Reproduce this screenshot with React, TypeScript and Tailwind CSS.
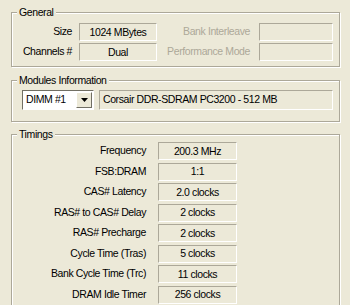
const font = { fontFamily: '"Liberation Sans", Arial, sans-serif' }

function Group({ title, className, children }: { title: string; className?: string; children: React.ReactNode }) {
  return (
    <div className={`relative border border-[#ACA899] shadow-[inset_1px_1px_0_#fff,1px_1px_0_#fff] ${className ?? ''}`}>
      <span className="absolute left-[5px] top-[-8px] bg-[#ECE9D8] px-[2px] text-[10.5px] leading-[14px] tracking-[-0.4px] text-black">{title}</span>
      {children}
    </div>
  )
}

function Box({ value, className }: { value?: string; className?: string }) {
  return (
    <div className={`flex h-[18px] items-center justify-center border border-t-[#ACA899] border-l-[#ACA899] border-b-white border-r-white bg-[#ECE9D8] text-[10.5px] leading-none tracking-[-0.4px] text-black ${className ?? ''}`}>
      {value}
    </div>
  )
}

const timings: [string, string][] = [
  ['Frequency', '200.3 MHz'],
  ['FSB:DRAM', '1:1'],
  ['CAS# Latency', '2.0 clocks'],
  ['RAS# to CAS# Delay', '2 clocks'],
  ['RAS# Precharge', '2 clocks'],
  ['Cycle Time (Tras)', '5 clocks'],
  ['Bank Cycle Time (Trc)', '11 clocks'],
  ['DRAM Idle Timer', '256 clocks'],
]

const label = 'whitespace-nowrap text-right text-[10.5px] tracking-[-0.4px]'

export default function App() {
  return (
    <div className="h-[305px] w-[350px] overflow-hidden bg-[#ECE9D8] pl-[11px] pt-[12px]" style={font}>
      <div className="flex w-[329px] flex-col">
        <Group title="General" className="h-[55px]">
          <div className="flex flex-col gap-[2px] pt-[10px]">
            <div className="flex items-center">
              <span className={`w-[60px] ${label}`}>Size</span>
              <Box value="1024 MBytes" className="ml-[7px] w-[78px]" />
              <span className={`w-[93px] text-[#ACA899] ${label}`}>Bank Interleave</span>
              <Box className="ml-[9px] w-[74px]" />
            </div>
            <div className="flex items-center">
              <span className={`w-[60px] ${label}`}>Channels #</span>
              <Box value="Dual" className="ml-[7px] w-[78px]" />
              <span className={`w-[93px] text-[#ACA899] ${label}`}>Performance Mode</span>
              <Box className="ml-[9px] w-[74px]" />
            </div>
          </div>
        </Group>

        <Group title="Modules Information" className="mt-[13px] h-[42px]">
          <div className="flex items-center gap-[5px] pl-[10px] pt-[9px]">
            <div className="flex h-[20px] w-[72px] items-center border border-t-[#716F64] border-l-[#716F64] border-b-white border-r-white bg-white">
              <span className="flex-1 pl-[3px] text-[10.5px] tracking-[-0.4px]">DIMM #1</span>
              <div className="mr-px flex h-[16px] w-[16px] items-center justify-center border border-t-white border-l-white border-b-[#716F64] border-r-[#716F64] bg-[#ECE9D8]">
                <svg width="7" height="4" viewBox="0 0 7 4"><path d="M0 0h7L3.5 4z" fill="#000" /></svg>
              </div>
            </div>
            <div className="flex h-[20px] w-[234px] items-center border border-t-[#ACA899] border-l-[#ACA899] border-b-white border-r-white pl-[3px] text-[10.5px] tracking-[-0.4px]">
              Corsair DDR-SDRAM PC3200 - 512 MB
            </div>
          </div>
        </Group>

        <Group title="Timings" className="mt-[12px] h-[200px]">
          <div className="flex flex-col gap-[2.5px] pt-[7px]">
            {timings.map(([k, v]) => (
              <div key={k} className="flex items-center">
                <span className={`w-[134px] ${label}`}>{k}</span>
                <Box value={v} className="ml-[12px] w-[79px]" />
              </div>
            ))}
          </div>
        </Group>
      </div>
    </div>
  )
}
